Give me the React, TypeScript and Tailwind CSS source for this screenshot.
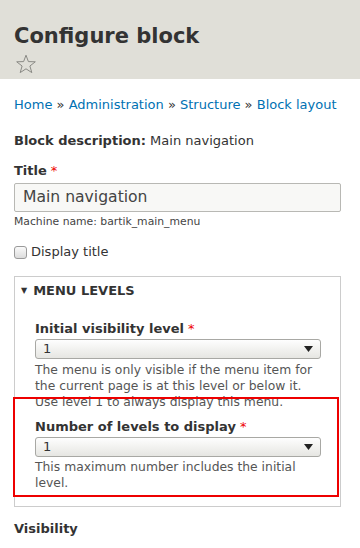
import React from 'react'

function Star() {
  return (
    <svg width="22" height="20" viewBox="0 0 22 20" className="block">
      <path
        d="M11 1.2 L13.4 7.6 L20.3 7.8 L14.9 12 L16.8 18.6 L11 14.8 L5.2 18.6 L7.1 12 L1.7 7.8 L8.6 7.6 Z"
        fill="none"
        stroke="#8a8a85"
        strokeWidth="1"
        strokeLinejoin="miter"
      />
    </svg>
  )
}

function Select({ value }: { value: string }) {
  return (
    <div className="flex h-[20px] items-center justify-between rounded-[3px] border border-[#a8a8a4] bg-gradient-to-b from-[#fefefe] to-[#e6e6e2] pl-[7px] pr-[7px] text-[13px] text-[#333]">
      <span className="leading-[18px]">{value}</span>
      <svg width="9" height="6" viewBox="0 0 9 6">
        <path d="M0 0 H9 L4.5 6 Z" fill="#222" />
      </svg>
    </div>
  )
}

const Required = () => <span className="ml-[4px] text-[#e00] font-normal">*</span>

export default function App() {
  return (
    <div className="relative w-[360px] min-h-[548px] bg-white font-['DejaVu_Sans',sans-serif] text-[#333] overflow-hidden">
      {/* header */}
      <div className="h-[79px] bg-[#e0dfd8] px-[14px] pt-[23px]">
        <h1 className="text-[21px] font-bold leading-[26px] text-[#333]">Configure block</h1>
        <div className="mt-[5px] ml-[1px]">
          <Star />
        </div>
      </div>

      <div className="pl-[14px] pr-[19px]">
        {/* breadcrumb */}
        <div className="mt-[16px] text-[13px] leading-[20px] text-[#333]">
          <a className="text-[#0071b3]">Home</a> »{' '}
          <a className="text-[#0071b3]">Administration</a> »{' '}
          <a className="text-[#0071b3]">Structure</a> »{' '}
          <a className="text-[#0071b3]">Block layout</a>
        </div>

        <div className="mt-[16px] text-[13px] leading-[20px]">
          <span className="font-bold">Block description:</span> Main navigation
        </div>

        <div className="mt-[10px] text-[13px] leading-[20px] font-bold">
          Title
          <Required />
        </div>
        <div className="mt-[2px] flex h-[29px] items-center rounded-[2px] border border-[#b8b8b4] bg-[#f8f8f6] pl-[8px] text-[15.6px] text-[#444]">
          Main navigation
        </div>
        <div className="mt-[2px] text-[10.8px] leading-[16px] text-[#444]">
          Machine name: bartik_main_menu
        </div>

        <div className="mt-[12px] flex items-center text-[13px] leading-[20px]">
          <span className="mr-[4px] inline-block h-[13px] w-[13px] rounded-[3px] border border-[#9a9a9a] bg-gradient-to-b from-[#fafafa] to-[#dcdcdc]" />
          Display title
        </div>

        {/* fieldset */}
        <div className="mt-[14px] border border-[#cccccc] pb-[15px]">
          <div className="flex items-center pl-[6px] pt-[4px] text-[13px] leading-[20px] font-bold uppercase">
            <span className="mr-[6px] text-[8px]">▼</span>
            Menu levels
          </div>

          <div className="pl-[20px] pr-[19px]">
            <div className="mt-[18px] text-[13px] leading-[20px] font-bold">
              Initial visibility level
              <Required />
            </div>
            <Select value="1" />
            <div className="mt-[3px] whitespace-nowrap text-[12.35px] leading-[16px] text-[#555]">
              The menu is only visible if the menu item for
              <br />
              the current page is at this level or below it.
              <br />
              Use level 1 to always display this menu.
            </div>

            <div className="mt-[7px] text-[13px] leading-[20px] font-bold">
              Number of levels to display
              <Required />
            </div>
            <Select value="1" />
            <div className="mt-[2px] whitespace-nowrap text-[12.35px] leading-[16px] text-[#555]">
              This maximum number includes the initial
              <br />
              level.
            </div>
          </div>
        </div>

        <div className="mt-[12px] text-[13px] leading-[20px] font-bold">Visibility</div>
      </div>

      {/* annotation highlight */}
      <div className="absolute left-[13px] top-[397px] h-[100px] w-[326px] border-2 border-[#ee0000]" />
    </div>
  )
}
